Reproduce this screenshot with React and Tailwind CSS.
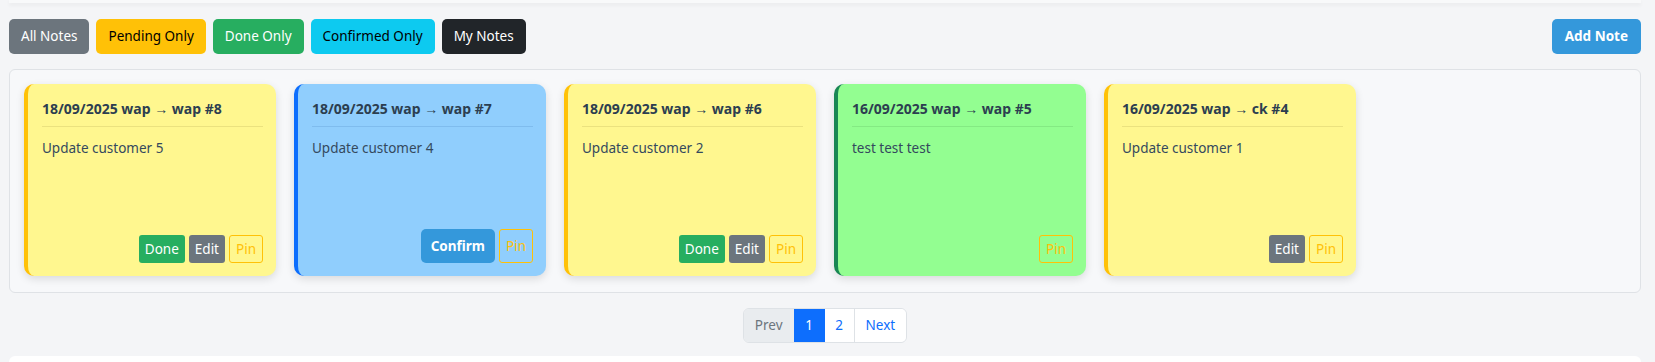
import React from "react";

const font = { fontFamily: '"Noto Sans", "Open Sans", Arial, sans-serif' };

const notes = [
  { title: "18/09/2025 wap → wap #8", body: "Update customer 5", kind: "pending", actions: ["done", "edit"] },
  { title: "18/09/2025 wap → wap #7", body: "Update customer 4", kind: "blue", actions: ["confirm"] },
  { title: "18/09/2025 wap → wap #6", body: "Update customer 2", kind: "pending", actions: ["done", "edit"] },
  { title: "16/09/2025 wap → wap #5", body: "test test test", kind: "green", actions: [] },
  { title: "16/09/2025 wap → ck #4", body: "Update customer 1", kind: "pending", actions: ["edit"] },
];

function Card({ note }) {
  const cls =
    note.kind === "pending"
      ? "bg-[#fff78f] border-[#ffc107]"
      : note.kind === "blue"
      ? "bg-[#90cefd] border-[#0d6efd]"
      : "bg-[#93fe91] border-[#198754]";
  const line =
    note.kind === "pending"
      ? "border-[#ebe27f]"
      : note.kind === "blue"
      ? "border-[#7fbcee]"
      : "border-[#84ea83]";
  return (
    <div
      className={`w-[252px] h-[192px] rounded-[10px] border-l-4 ${cls} shadow-[0_3px_8px_rgba(0,0,0,0.12)] pl-[14px] pr-[13px] pt-[14px] pb-[13px] flex flex-col`}
    >
      <div className={`text-[14px] leading-[21px] font-bold text-[#2c3e50] pb-[7px] border-b ${line}`}>
        {note.title}
      </div>
      <div className="mt-[11px] text-[13.5px] leading-[21px] text-[#34495e]">{note.body}</div>
      <div className="mt-auto flex justify-end gap-[4px]">
        {note.actions.includes("done") && (
          <button className="h-[28px] px-[6px] rounded-[3px] bg-[#27ae60] text-white text-[13.5px] leading-[20px]">
            Done
          </button>
        )}
        {note.actions.includes("edit") && (
          <button className="h-[28px] px-[6px] rounded-[3px] bg-[#6c757d] text-white text-[13.5px] leading-[20px]">
            Edit
          </button>
        )}
        {note.actions.includes("confirm") && (
          <button className="h-[34px] px-[10px] rounded-[5px] bg-[#3498db] text-white text-[13.5px] font-bold leading-[20px]">
            Confirm
          </button>
        )}
        <button
          className={`${note.actions.includes("confirm") ? "h-[34px]" : "h-[28px]"} w-[34px] rounded-[3px] border border-[#ffc107] text-[#ffc107] text-[13.5px] leading-[20px] flex items-center justify-center`}
        >
          Pin
        </button>
      </div>
    </div>
  );
}

export default function App() {
  return (
    <div className="min-h-[362px] bg-[#f4f5f7] overflow-hidden" style={font}>
      <div className="ml-[9px] mr-[14px] h-[3px] bg-[#f8f9fa] shadow-[0_2px_4px_rgba(0,0,0,0.06)]" />
      <div className="pl-[9px] pr-[14px] pt-[16px]">
        <div className="flex items-center justify-between">
          <div className="flex gap-[7px]">
            <button className="h-[35px] px-[12px] rounded-[5px] bg-[#6c757d] text-white text-[13.5px]">All Notes</button>
            <button className="h-[35px] px-[12px] rounded-[5px] bg-[#ffc107] text-black text-[13.5px]">Pending Only</button>
            <button className="h-[35px] px-[12px] rounded-[5px] bg-[#27ae60] text-white text-[13.5px]">Done Only</button>
            <button className="h-[35px] px-[12px] rounded-[5px] bg-[#0dcaf0] text-black text-[13.5px]">Confirmed Only</button>
            <button className="h-[35px] px-[12px] rounded-[5px] bg-[#212529] text-white text-[13.5px]">My Notes</button>
          </div>
          <button className="h-[35px] px-[13px] rounded-[5px] bg-[#3498db] text-white text-[13.5px] font-bold">Add Note</button>
        </div>

        <div className="mt-[15px] border border-[#dfe2e6] rounded-[6px] bg-[#f7f8fa] pl-[14px] pt-[14px] pb-[16px] flex gap-[18px]">
          {notes.map((n, i) => (
            <Card key={i} note={n} />
          ))}
        </div>

        <div className="mt-[15px] flex justify-center">
          <div className="flex h-[35px] rounded-[6px] border border-[#dee2e6] overflow-hidden text-[13.5px]">
            <div className="px-[11px] flex items-center bg-[#e9ecef] text-[#6c757d]">Prev</div>
            <div className="w-[31px] flex items-center justify-center bg-[#0d6efd] text-white">1</div>
            <div className="w-[30px] flex items-center justify-center bg-white text-[#0d6efd] border-r border-[#dee2e6]">2</div>
            <div className="px-[11px] flex items-center bg-white text-[#0d6efd]">Next</div>
          </div>
        </div>

        <div className="mt-[13px] h-[20px] bg-white rounded-t-[6px]" />
      </div>
    </div>
  );
}
